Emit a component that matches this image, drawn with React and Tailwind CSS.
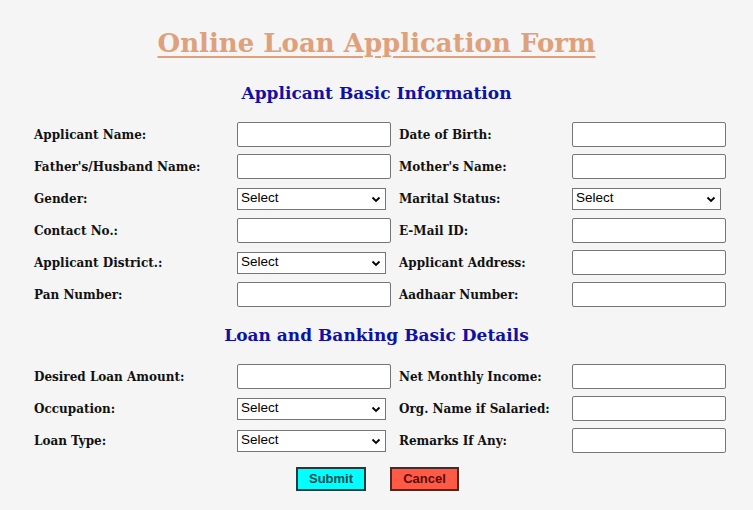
const serif = { fontFamily: '"DejaVu Serif", "Liberation Serif", serif' };
const sans = { fontFamily: '"Liberation Sans", Arial, sans-serif' };

const basicRows = [
  ['Applicant Name:', 'text', 'Date of Birth:', 'text'],
  ["Father's/Husband Name:", 'text', "Mother's Name:", 'text'],
  ['Gender:', 'select', 'Marital Status:', 'select'],
  ['Contact No.:', 'text', 'E-Mail ID:', 'text'],
  ['Applicant District.:', 'select', 'Applicant Address:', 'text'],
  ['Pan Number:', 'text', 'Aadhaar Number:', 'text'],
];

const loanRows = [
  ['Desired Loan Amount:', 'text', 'Net Monthly Income:', 'text'],
  ['Occupation:', 'select', 'Org. Name if Salaried:', 'text'],
  ['Loan Type:', 'select', 'Remarks If Any:', 'text'],
];

function Field({ type }) {
  if (type === 'select') {
    return (
      <div className="flex h-[22px] w-[149px] items-center justify-between border border-[#767676] bg-white pl-[3px] pr-[4px] text-[13.5px] text-black" style={sans}>
        <span>Select</span>
        <svg width="10" height="10" viewBox="0 0 10 10">
          <path d="M1.5 3.5 L5 7 L8.5 3.5" fill="none" stroke="#000" strokeWidth="1.8" />
        </svg>
      </div>
    );
  }
  return <div className="h-[25px] w-[154px] rounded-[2px] border border-[#767676] bg-white" />;
}

function Rows({ rows }) {
  return (
    <div className="flex flex-col gap-[7px] pl-[34px]">
      {rows.map(([l1, t1, l2, t2]) => (
        <div key={l1} className="grid h-[25px] grid-cols-[203px_162px_173px_154px] items-center">
          <span className="text-[12px] font-bold text-[#111]">{l1}</span>
          <Field type={t1} />
          <span className="text-[12px] font-bold text-[#111]">{l2}</span>
          <Field type={t2} />
        </div>
      ))}
    </div>
  );
}

export default function App() {
  return (
    <div className="h-[510px] w-[753px] bg-[#f5f5f5]" style={serif}>
      <div className="pt-[24px] text-center">
        <h1 className="text-[26px] font-bold leading-[38px] text-[#dfa07c] underline decoration-[2px] underline-offset-[4px]">
          Online Loan Application Form
        </h1>
      </div>
      <h2 className="mt-[17px] text-center text-[17px] font-bold leading-[28px] text-[#1010a6]">
        Applicant Basic Information
      </h2>
      <div className="mt-[15px]">
        <Rows rows={basicRows} />
      </div>
      <h2 className="mt-[14px] text-center text-[17px] font-bold leading-[28px] text-[#1010a6]">
        Loan and Banking Basic Details
      </h2>
      <div className="mt-[15px]">
        <Rows rows={loanRows} />
      </div>
      <div className="mt-[14px] flex justify-center gap-[24px] pl-[2px]" style={sans}>
        <button className="h-[24px] w-[70px] border-2 border-[#1f3b3b] bg-[#00ffff] text-[13px] font-bold text-[#0d4a52]">
          Submit
        </button>
        <button className="h-[24px] w-[69px] border-2 border-[#4a2a26] bg-[#ff5a45] text-[13px] font-bold text-[#5a0a0a]">
          Cancel
        </button>
      </div>
    </div>
  );
}
